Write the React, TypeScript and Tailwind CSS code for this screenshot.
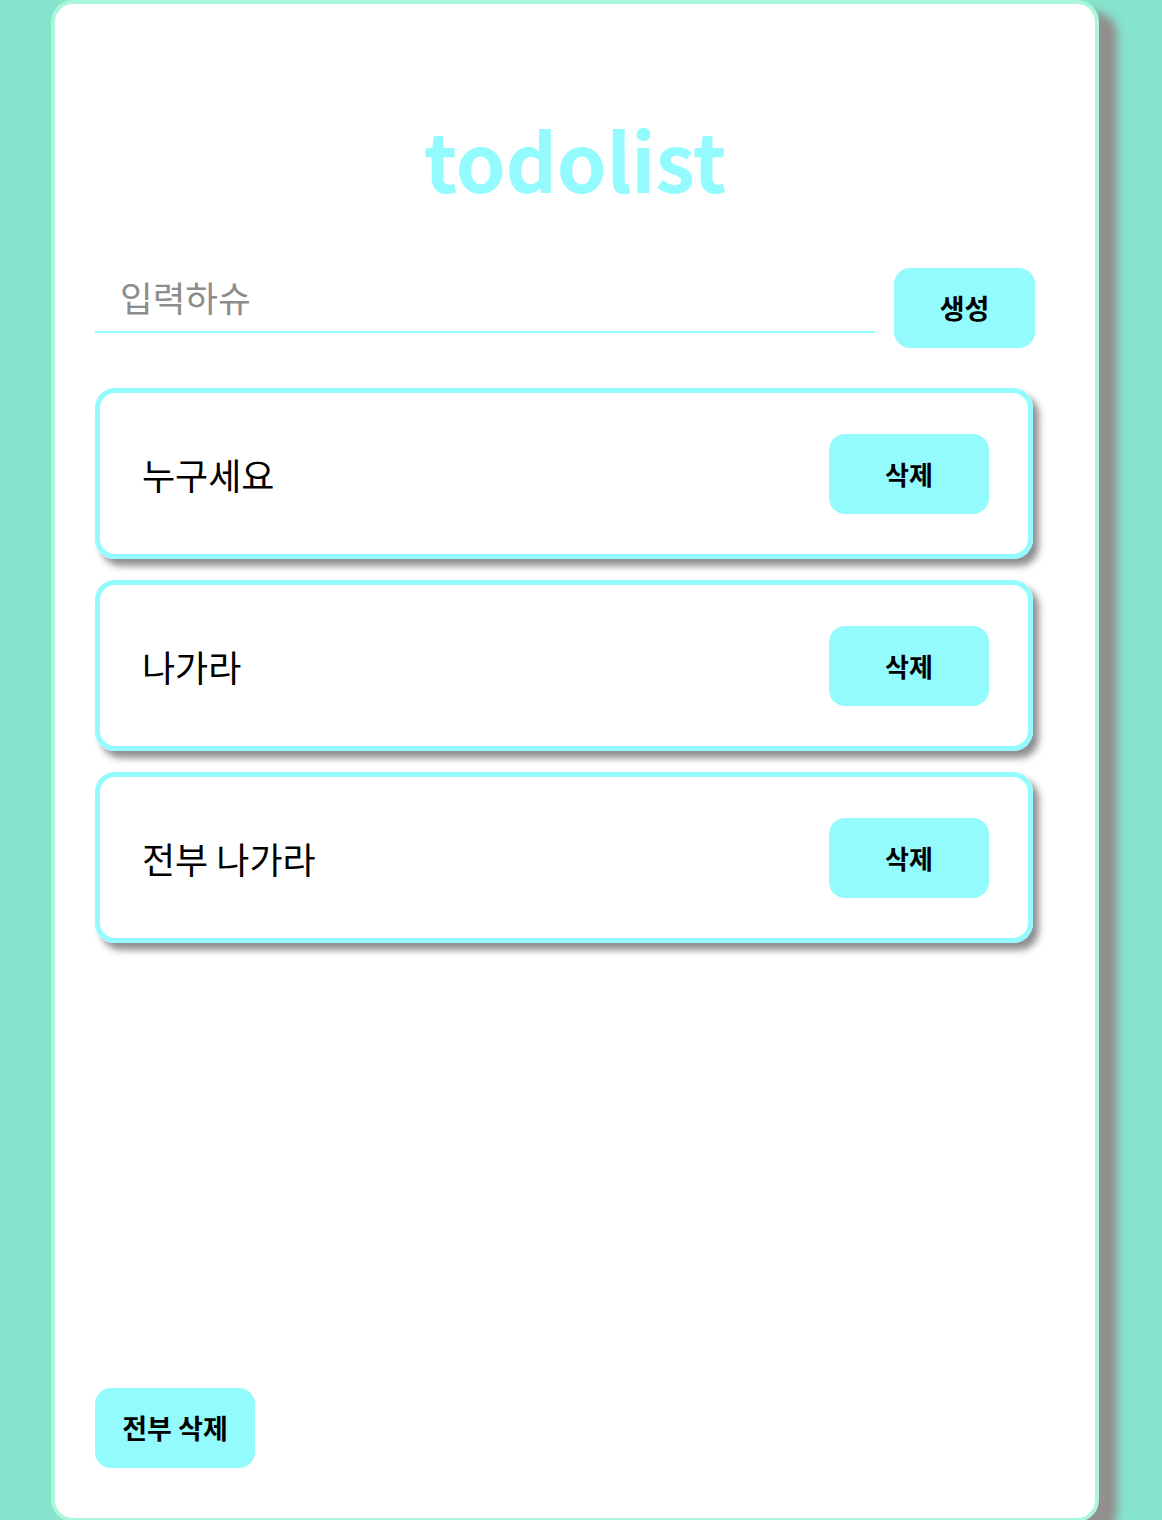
import { useState } from "react";

const font = { fontFamily: '"Noto Sans CJK KR", "Noto Sans", sans-serif' };

export default function App() {
  const [todos, setTodos] = useState<string[]>(["누구세요", "나가라", "전부 나가라"]);
  const [text, setText] = useState("");

  const add = () => {
    if (!text.trim()) return;
    setTodos([...todos, text]);
    setText("");
  };

  return (
    <div className="min-h-screen bg-[#86e3ce]" style={font}>
      <div className="ml-[51px] w-[1048px] h-[1522px] bg-white border-4 border-[#aaf7d9] rounded-[22px] shadow-[18px_12px_9px_#948f8f] px-[40px] pt-[94px] flex flex-col">
        <h1 className="text-center text-[80px] leading-[120px] font-bold text-[#93fbfd] tracking-[-0.3px]">
          todolist
        </h1>

        <div className="flex items-start gap-[19px] mt-[50px] mr-[20px]">
          <input
            value={text}
            onChange={(e) => setText(e.target.value)}
            placeholder="입력하슈"
            className="flex-1 h-[65px] border-b-2 border-[#93fbfd] pl-[25px] pb-[7px] text-[35.5px] outline-none placeholder:text-[#8c8c8c]"
          />
          <button
            onClick={add}
            className="w-[141px] h-[80px] rounded-[16px] bg-[#93fbfd] text-[27px] font-bold text-black"
          >
            생성
          </button>
        </div>

        <ul className="mt-[40px] flex flex-col gap-[21px] mr-[22px]">
          {todos.map((t, i) => (
            <li
              key={i}
              className="h-[171px] border-[5px] border-[#93fbfd] rounded-[20px] shadow-[6px_7px_7px_#8f8f8f] flex items-center justify-between pl-[42px] pr-[39px]"
            >
              <span className="text-[36px] text-black">{t}</span>
              <button
                onClick={() => setTodos(todos.filter((_, j) => j !== i))}
                className="w-[160px] h-[80px] rounded-[16px] bg-[#93fbfd] text-[26px] font-bold text-black"
              >
                삭제
              </button>
            </li>
          ))}
        </ul>

        <div className="mt-auto mb-[50px]">
          <button
            onClick={() => setTodos([])}
            className="w-[160px] h-[80px] rounded-[16px] bg-[#93fbfd] text-[27px] font-bold text-black"
          >
            전부 삭제
          </button>
        </div>
      </div>
    </div>
  );
}
